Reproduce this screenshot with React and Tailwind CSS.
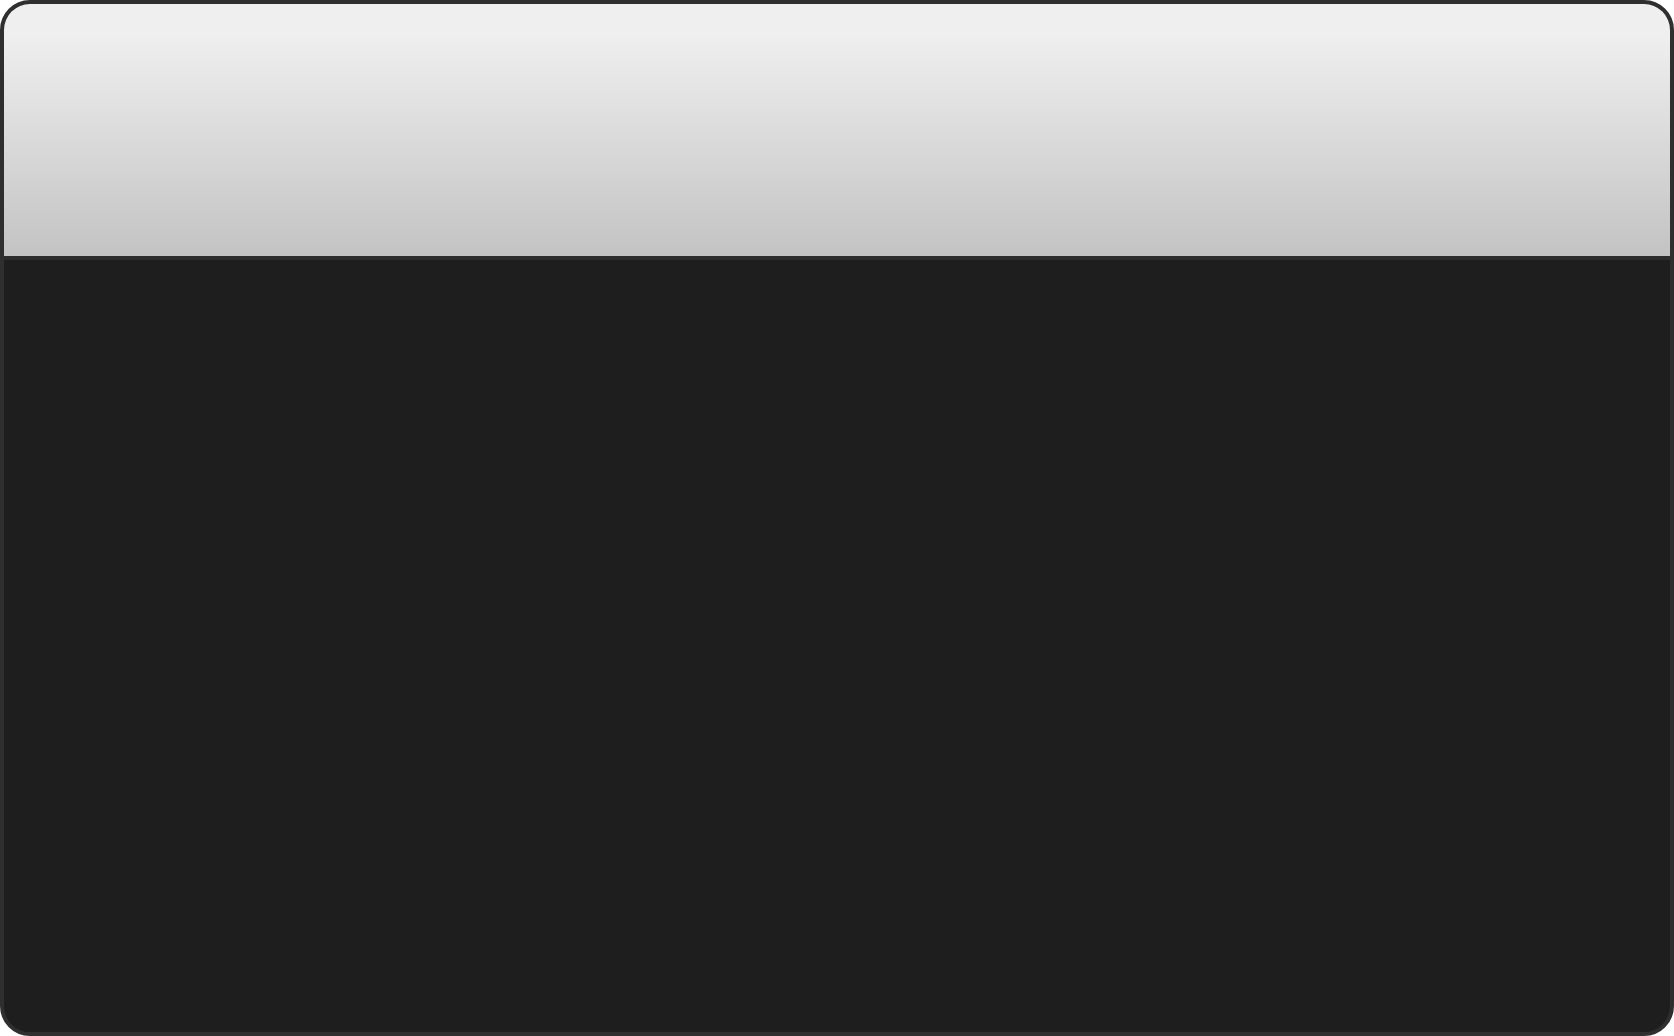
export default function App() {
  return (
    <div className="w-[1674px] h-[1036px] bg-white">
      <div className="w-full h-full rounded-[30px] border-4 border-[#2f2f2f] bg-[#1e1e1e] overflow-hidden flex flex-col">
        <div className="h-[256px] shrink-0 bg-[linear-gradient(to_bottom,#efefef_0%,#efefef_12%,#dcdcdc_50%,#c3c3c3_100%)] border-b-4 border-[#2d2d2d]" />
        <div className="flex-1" />
      </div>
    </div>
  );
}
